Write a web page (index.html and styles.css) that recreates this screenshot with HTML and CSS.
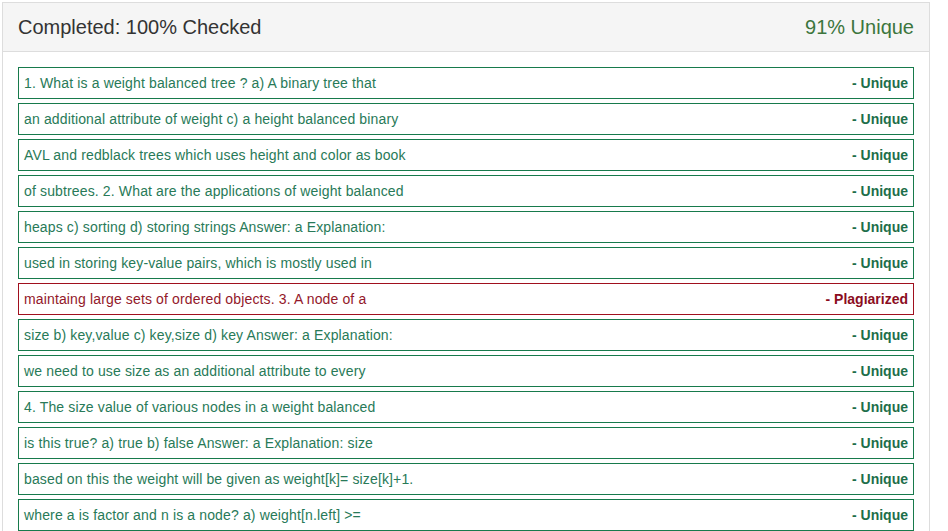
FILE: index.html
```html
<!DOCTYPE html>
<html>
<head>
<meta charset="utf-8">
<link rel="stylesheet" href="styles.css">
</head>
<body>
<div class="panel">
  <div class="panel-heading">
    <span class="title">Completed: 100% Checked</span>
    <span class="score">91% Unique</span>
  </div>
  <div class="panel-body">
    <div class="row ok"><span class="txt">1. What is a weight balanced tree ? a) A binary tree that</span><span class="tag">- Unique</span></div>
    <div class="row ok"><span class="txt">an additional attribute of weight c) a height balanced binary</span><span class="tag">- Unique</span></div>
    <div class="row ok"><span class="txt">AVL and redblack trees which uses height and color as book</span><span class="tag">- Unique</span></div>
    <div class="row ok"><span class="txt">of subtrees. 2. What are the applications of weight balanced</span><span class="tag">- Unique</span></div>
    <div class="row ok"><span class="txt">heaps c) sorting d) storing strings Answer: a Explanation:</span><span class="tag">- Unique</span></div>
    <div class="row ok"><span class="txt">used in storing key-value pairs, which is mostly used in</span><span class="tag">- Unique</span></div>
    <div class="row bad"><span class="txt">maintaing large sets of ordered objects. 3. A node of a</span><span class="tag">- Plagiarized</span></div>
    <div class="row ok"><span class="txt">size b) key,value c) key,size d) key Answer: a Explanation:</span><span class="tag">- Unique</span></div>
    <div class="row ok"><span class="txt">we need to use size as an additional attribute to every</span><span class="tag">- Unique</span></div>
    <div class="row ok"><span class="txt">4. The size value of various nodes in a weight balanced</span><span class="tag">- Unique</span></div>
    <div class="row ok"><span class="txt">is this true? a) true b) false Answer: a Explanation: size</span><span class="tag">- Unique</span></div>
    <div class="row ok"><span class="txt">based on this the weight will be given as weight[k]= size[k]+1.</span><span class="tag">- Unique</span></div>
    <div class="row ok"><span class="txt">where a is factor and n is a node? a) weight[n.left] &gt;=</span><span class="tag">- Unique</span></div>
  </div>
</div>
</body>
</html>
```

FILE: styles.css
```css
html, body {
  margin: 0;
  padding: 0;
  background: #ffffff;
  overflow: hidden;
}

body {
  font-family: "Liberation Sans", Arial, Helvetica, sans-serif;
  color: #333333;
}

.panel {
  box-sizing: border-box;
  width: 928px;
  margin: 2px 0 0 2px;
  border: 1px solid #dddddd;
  background: #ffffff;
}

.panel-heading {
  display: flex;
  justify-content: space-between;
  align-items: center;
  height: 48px;
  padding: 0 15px;
  background: #f5f5f5;
  border-bottom: 1px solid #dddddd;
  font-size: 20px;
}

.title {
  color: #333333;
}

.score {
  color: #3c763d;
}

.panel-body {
  padding: 15px;
  display: flex;
  flex-direction: column;
  gap: 4px;
}

.row {
  box-sizing: border-box;
  height: 32px;
  display: flex;
  justify-content: space-between;
  align-items: center;
  padding: 0 5px;
  font-size: 14px;
  border: 1px solid;
}

.txt {
  letter-spacing: 0.14px;
}

.row.ok {
  border-color: #177a4c;
  color: #287a58;
}

.row.ok .tag {
  color: #1d6e4a;
}

.row.bad {
  border-color: #a0101e;
  color: #93182a;
}

.row.bad .tag {
  color: #8b0d1e;
}

.tag {
  font-weight: bold;
}
```
